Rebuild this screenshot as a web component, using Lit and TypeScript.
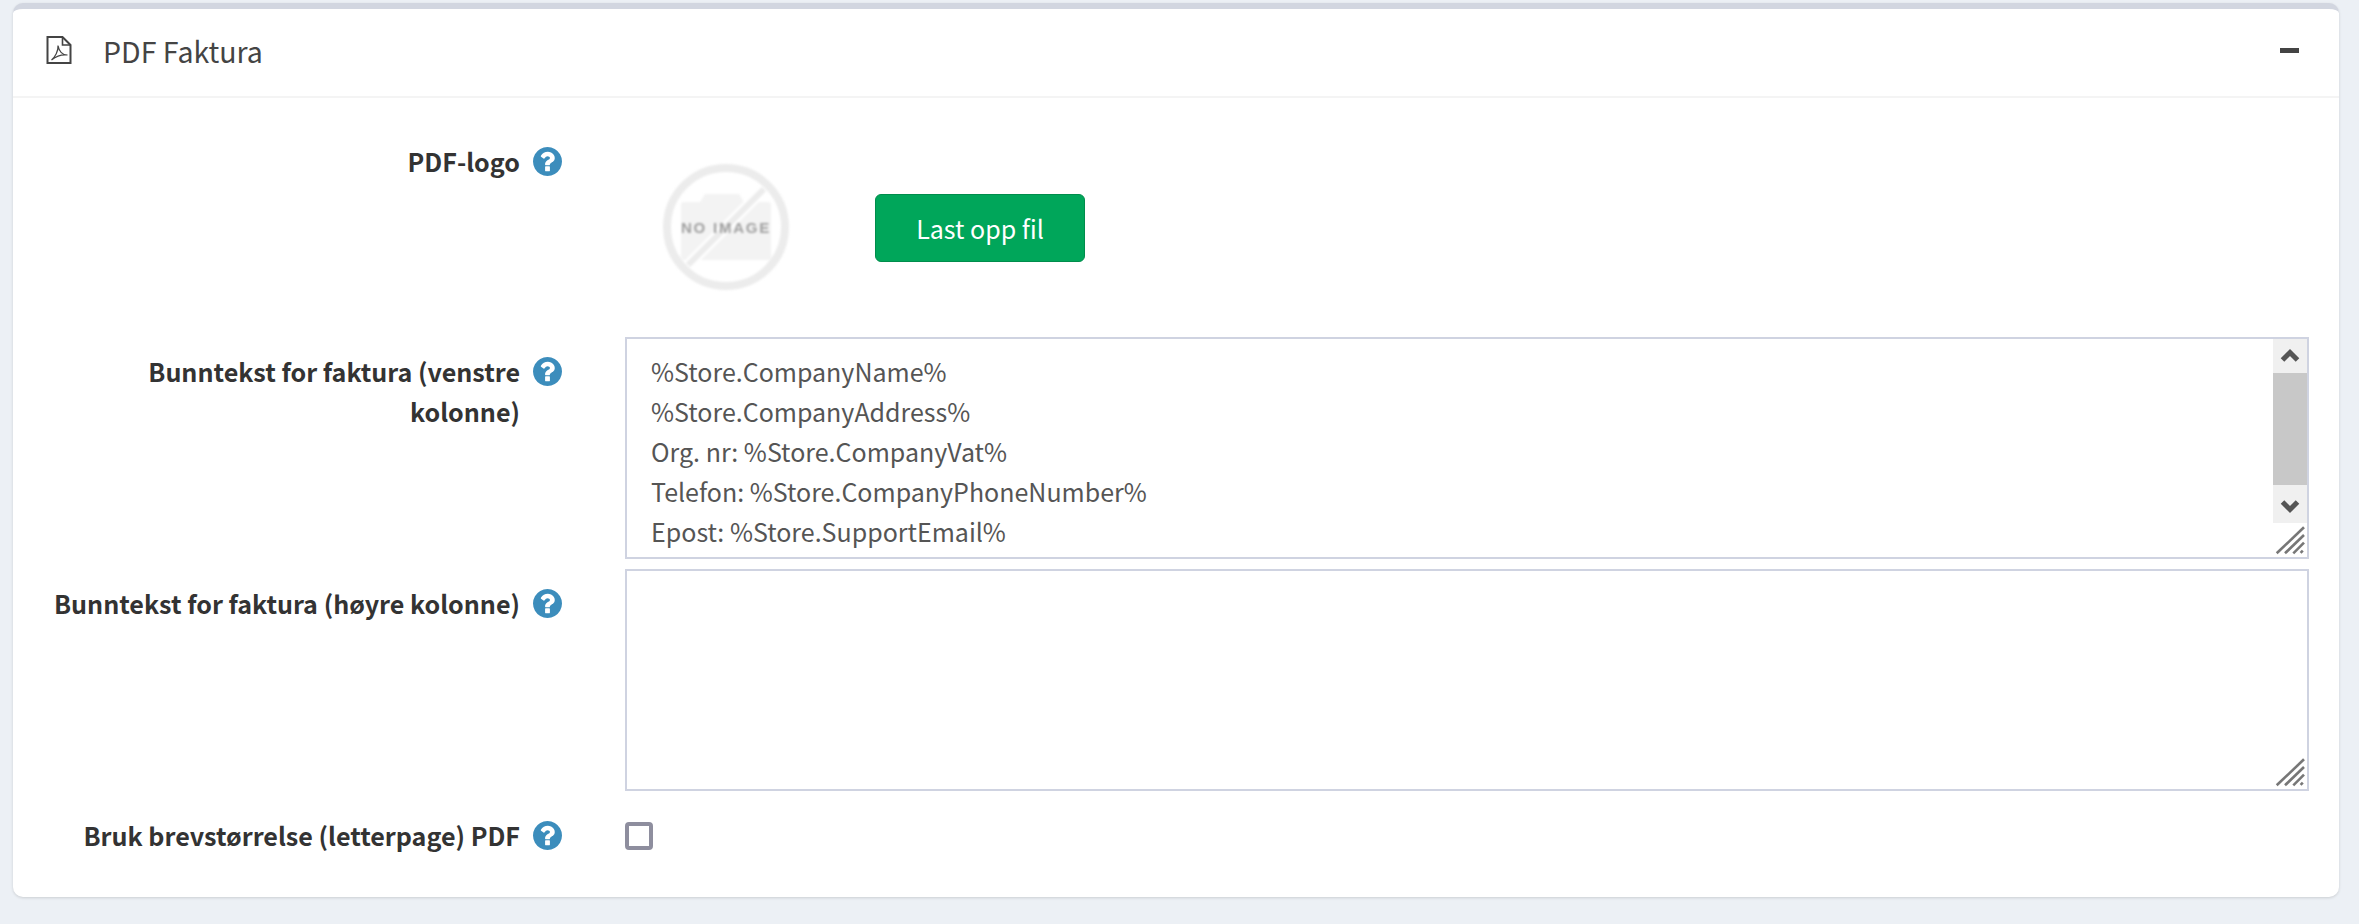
import { LitElement, html, css } from "lit";
import { customElement } from "lit/decorators.js";

const help = html`<svg class="help" viewBox="128 128 1536 1536"><path fill="#3c8dbc" d="M1024 1376v-192q0-14-9-23t-23-9h-192q-14 0-23 9t-9 23v192q0 14 9 23t23 9h192q14 0 23-9t9-23zm256-672q0-88-55.5-163t-138.5-116-170-41q-243 0-371 213-15 24 8 42l132 100q7 6 19 6 16 0 25-12 53-68 86-92 34-24 86-24 48 0 85.5 26t37.5 59q0 38-20 61t-68 45q-63 28-115.5 86.5t-52.5 125.5v36q0 14 9 23t23 9h192q14 0 23-9t9-23q0-19 21.5-49.5t54.5-49.5q32-18 49-28.5t46-35 44.5-48 28-60.5 12.5-81zm384 192q0 209-103 385.5t-279.5 279.5-385.5 103-385.5-103-279.5-279.5-103-385.5 103-385.5 279.5-279.5 385.5-103 385.5 103 279.5 279.5 103 385.5z"/></svg>`;

const grip = html`<svg class="grip" viewBox="0 0 34 34"><g stroke="#777" stroke-width="2.6" stroke-linecap="butt"><path d="M3.7 30.3L31 4.3"/><path d="M12 30.3L31 12"/><path d="M20.3 30.3L31 19.7"/><path d="M27.6 29.8L29.8 27.6"/></g></svg>`;

@customElement("app-root")
export class AppRoot extends LitElement {
  static styles = css`
    :host { display: block; height: 924px; background: #ecf0f5; font-family: "Noto Sans CJK JP", "Liberation Sans", sans-serif; color: #333; overflow: hidden; }
    .card { margin: 3px 20px 0 13px; height: 894px; box-sizing: border-box; background: #fff; border-top: 6px solid #d2d6e0; border-radius: 10px; box-shadow: 0 1px 3px rgba(0,0,0,.14); }
    .head { height: 89px; box-sizing: border-box; border-bottom: 2px solid #f4f4f4; display: flex; align-items: center; padding: 0 40px 5px 33px; color: #444; }
    .pdf { width: 26px; height: 28px; flex: none; }
    .title { font-size: 28.5px; margin-left: 31px; flex: 1; }
    .minus { width: 19px; height: 5px; background: #444; }
    .body { padding-top: 43px; }
    .row { display: flex; align-items: flex-start; }
    .label { width: 507px; flex: none; box-sizing: border-box; padding-left: 32px; text-align: right; font-weight: 700; font-size: 25.1px; line-height: 40px; color: #333; }
    .hcell { width: 105px; flex: none; padding: 0 0 0 12.5px; box-sizing: border-box; height: 40px; display: flex; align-items: center; }
    .down { margin-top: 14px; }
    .help { width: 29px; height: 29px; display: block; }
    .logo-row { height: 196px; }
    .upload { display: flex; align-items: center; gap: 84px; height: 174px; }
    .noimg { width: 130px; height: 130px; display: block; margin: 0 0 3px 36px; }
    .btn { width: 210px; height: 68px; box-sizing: border-box; background: #00a65a; border: 1px solid #008d4c; border-radius: 6px; color: #fff; font: 400 25px "Noto Sans CJK JP", sans-serif; padding: 0; }
    .field { position: relative; width: 1684px; height: 222px; box-sizing: border-box; border: 2px solid #cfd3e1; background: #fff; }
    textarea { display: block; width: 100%; height: 100%; box-sizing: border-box; border: 0; outline: 0; resize: none; overflow: hidden; margin: 0; padding: 12px 50px 0 24px; font: 400 25px/40px "Noto Sans CJK JP", sans-serif; color: #555; background: transparent; }
    .sb { position: absolute; right: 0; top: 0; bottom: 0; width: 34px; background: #f0f0f0; }
    .sb-thumb { position: absolute; left: 0; right: 0; top: 34px; height: 112px; background: #c8c8c8; }
    .sb-up, .sb-down { position: absolute; left: 0; width: 34px; display: block; }
    .sb-up { top: 0; height: 34px; }
    .sb-down { top: 146px; height: 38px; }
    .corner { position: absolute; right: 0; bottom: 0; width: 34px; height: 34px; background: #fff; }
    .grip { position: absolute; right: 0; bottom: 0; width: 34px; height: 34px; display: block; }
    .gap { margin-top: 10px; }
    .check-row { margin-top: 24px; }
    .check { width: 28px; height: 28px; box-sizing: border-box; border: 4px solid #8e8e9e; border-radius: 4px; margin-top: 7px; background: #fff; }
  `;

  render() {
    return html`<section class="card">
      <header class="head">
        <svg class="pdf" viewBox="0 0 26 28"><g fill="none" stroke="#444"><path stroke-width="2" d="M1.5 1H16.5L24.5 9V27H1.5Z"/><path stroke-width="1.6" d="M16.5 1V9H24.5"/><path stroke-width="1.2" d="M5.5 24C9 21 12.5 15 12 9.5C13 15 16 19 21.5 19C17 18.3 10.5 20 5.5 24Z"/></g></svg>
        <div class="title">PDF Faktura</div>
        <div class="minus"></div>
      </header>
      <div class="body">
        <div class="row logo-row">
          <label class="label">PDF-logo</label><div class="hcell">${help}</div>
          <div class="upload">
            <svg class="noimg" viewBox="0 0 130 130">
              <g style="filter: blur(1px)">
                <path d="M23 40h16l5-8h34l5 8h24q3 0 3 3v52q0 3-3 3H23q-3 0-3-3V43q0-3 3-3z" fill="#f3f3f3"/>
                <circle cx="65" cy="65" r="59" fill="none" stroke="#ececec" stroke-width="8"/>
                <path d="M29 101L101 29" stroke="#fff" stroke-width="11"/>
                <path d="M27 103L103 27" stroke="#ececec" stroke-width="6"/>
                <text x="65" y="71" text-anchor="middle" font-family="Liberation Sans" font-weight="700" font-size="15" letter-spacing="1.8" fill="#a0a0a0">NO IMAGE</text>
              </g>
            </svg>
            <button class="btn">Last opp fil</button>
          </div>
        </div>
        <div class="row">
          <label class="label down">Bunntekst for faktura (venstre kolonne)</label><div class="hcell down">${help}</div>
          <div class="field">
            <textarea>%Store.CompanyName%
%Store.CompanyAddress%
Org. nr: %Store.CompanyVat%
Telefon: %Store.CompanyPhoneNumber%
Epost: %Store.SupportEmail%</textarea>
            <div class="sb">
              <svg class="sb-up" viewBox="0 0 34 34"><path d="M9.5 21L17 13.5L24.5 21" fill="none" stroke="#555" stroke-width="5"/></svg>
              <div class="sb-thumb"></div>
              <svg class="sb-down" viewBox="0 0 34 38"><path d="M9.5 17L17 24.5L24.5 17" fill="none" stroke="#555" stroke-width="5"/></svg>
              <div class="corner">${grip}</div>
            </div>
          </div>
        </div>
        <div class="row gap">
          <label class="label down">Bunntekst for faktura (høyre kolonne)</label><div class="hcell down">${help}</div>
          <div class="field"><textarea></textarea>${grip}</div>
        </div>
        <div class="row check-row">
          <label class="label">Bruk brevstørrelse (letterpage) PDF</label><div class="hcell">${help}</div>
          <div class="check"></div>
        </div>
      </div>
    </section>`;
  }
}
